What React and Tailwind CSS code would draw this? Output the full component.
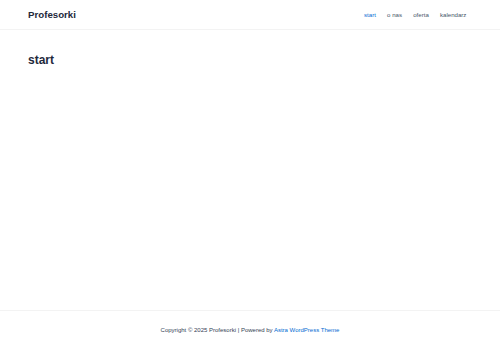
import React from 'react';

const navItems = ['start', 'o nas', 'oferta', 'kalendarz'];

const App = () => {
  return (
    <div
      className="flex h-[348px] flex-col bg-white text-[#334155]"
      style={{ fontFamily: '"Liberation Sans", Arial, sans-serif' }}
    >
      <header className="flex h-[30px] items-center justify-between border-b border-[#f3f3f3] pl-[28px] pr-[28px] pt-[1px]">
        <div className="text-[9.7px] font-bold text-[#1e293b]">Profesorki</div>
        <nav className="flex">
          {navItems.map((item, i) => (
            <a
              key={item}
              href="#"
              className={`px-[5.6px] text-[6.1px] font-normal ${i === 0 ? 'text-[#046bd2]' : 'text-[#475569]'}`}
            >
              {item}
            </a>
          ))}
        </nav>
      </header>

      <main className="flex-1 px-[28px] pt-[22px]">
        <h1 className="text-[12px] font-bold leading-[16px] text-[#1e293b]">start</h1>
      </main>

      <footer className="flex h-[38px] items-center justify-center border-t border-[#f3f3f3] pt-[1px] text-[6px] text-[#334155]">
        <p>
          Copyright © 2025 Profesorki | Powered by{' '}
          <a href="#" className="text-[#046bd2]">
            Astra WordPress Theme
          </a>
        </p>
      </footer>
    </div>
  );
};

export default App;
